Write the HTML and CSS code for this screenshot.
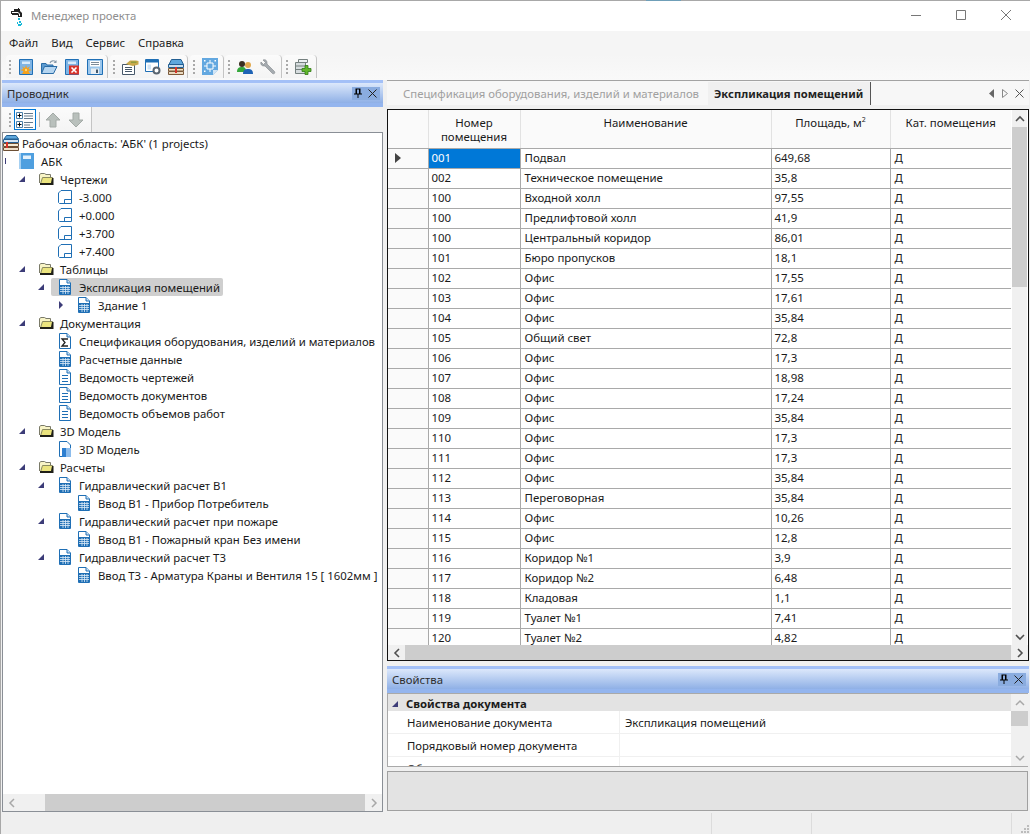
FILE: index.html
```html
<!DOCTYPE html>
<html lang="ru">

<head>
    <meta charset="UTF-8">
    <title>Менеджер проекта</title>
    <link rel="stylesheet" href="styles.css">
</head>

<body>

    <!-- icons used more than once -->
    <svg class="sprites" width="0" height="0">
        <symbol id="i-table" viewBox="0 0 16 16">
            <path d="M2.500 .5H10L13.500 4V15.500H2.500Z" fill="#fff" stroke="#1f6fb5"/>
            <path d="M10 .5V4H13.500" fill="#cfe3f5" stroke="#1f6fb5"/>
            <path d="M3 6H13V15H3Z" fill="#1f6fb5"/>
            <path d="M3 8.500H13M3 10.500H13M3 12.500H13M6 7V15M8.500 7V15M11 7V15" stroke="#dcebf8" stroke-width=".8"/>
        </symbol>
        <symbol id="i-doc" viewBox="0 0 16 16">
            <path d="M2.500 .5H10L13.500 4V15.500H2.500Z" fill="#fff" stroke="#1f6fb5"/>
            <path d="M10 .5V4H13.500" fill="#cfe3f5" stroke="#1f6fb5"/>
            <path d="M5 6.500H11M5 9.500H11M5 12.500H11" stroke="#1f6fb5"/>
        </symbol>
        <symbol id="i-folder" viewBox="0 0 16 16">
            <path d="M1.500 12V3.500L3 2.500H6.500L8 3.500H12.500V7" fill="#f8f4c6" stroke="#7a7a68"/>
            <path d="M2.500 13L4.500 6.500H14.500V13Z" fill="#ebe47e" stroke="#8a8a60"/>
            <path d="M2 12H13L14 7H15.500V14H2Z" fill="#1f1f18"/>
        </symbol>
        <symbol id="i-sheet" viewBox="0 0 16 16">
            <path d="M1.500 13.500V4L4 1.500H14.500V14.500H2.500Z" fill="#fff" stroke="#1f6fb5"/>
            <path d="M7.500 14V10.500H14.500" fill="none" stroke="#1f6fb5"/>
        </symbol>
        <symbol id="arrow-open" viewBox="0 0 8 8">
            <path d="M7 1V7H1Z" fill="#3c3c78"/>
        </symbol>
        <symbol id="arrow-closed" viewBox="0 0 8 8">
            <path d="M2 0L6 4L2 8Z" fill="#3c3c78"/>
        </symbol>
    </svg>

    <div class="window">

        <i class="behind-window"></i>

        <div class="titlebar">
            <svg class="app-icon" width="12" height="19" viewBox="0 0 12 19">
                <path d="M0 3H3V1H7V0H8V1H9V3L11 5V9H7V7H1V6H0Z" fill="#222"/>
                <path d="M1 4H7L9 6V8H8V6L7 5H1Z" fill="#fff"/>
                <path d="M7 10H9V12H7ZM8 13H10V15H8ZM6 14H7V16H6ZM7 16H10V18H7ZM10 15H11V17H10Z" fill="#18b8d8"/>
            </svg>
            <span class="title-text">Менеджер проекта</span>
            <div class="window-buttons">
                <svg width="12" height="12" viewBox="0 0 12 12"><path d="M1 6.500H11" stroke="#777"/></svg>
                <svg width="12" height="12" viewBox="0 0 12 12"><path d="M1.500 1.500H10.500V10.500H1.500Z" fill="none" stroke="#777"/></svg>
                <svg width="12" height="12" viewBox="0 0 12 12"><path d="M1 1L11 11M11 1L1 11" stroke="#777"/></svg>
            </div>
        </div>

        <div class="menubar">
            <span>Файл</span>
            <span>Вид</span>
            <span>Сервис</span>
            <span>Справка</span>
        </div>

        <div class="toolbar">
            <div class="tool-group group-1">
                <i class="grip"></i>
                <span class="tool">
                    <svg width="16" height="16" viewBox="0 0 16 16">
                        <path d="M1.500 .5H14.500V15.500H1.500Z" fill="#7fb4e4" stroke="#1f6fb5"/>
                        <path d="M4 2.500H12V5H4Z" fill="#d9ebfa"/>
                        <path d="M8 6L9 9L12 7.500L10.500 10L14 11L10.500 12L12 15H4L5.500 12L2 11L5.500 10L4 7.500L7 9Z" fill="#f7a11a"/>
                        <path d="M8 9.500L9 11L8 12.500L7 11Z" fill="#fff3a0"/>
                    </svg>
                </span>
                <span class="tool">
                    <svg width="18" height="16" viewBox="0 0 18 16">
                        <path d="M1.500 14.500V4.500H6L7 6H13V14.500Z" fill="#5d9bd0" stroke="#2a6ca6"/>
                        <path d="M1.500 14.500L4.500 7.500H17L13.500 14.500Z" fill="#b5d5f0" stroke="#2a6ca6"/>
                        <path d="M10 4C11 1.500 14 1 16 3" fill="none" stroke="#8a9cab" stroke-width="1.200"/>
                        <path d="M16.500 1V4H13.500Z" fill="#8a9cab"/>
                    </svg>
                </span>
                <span class="tool">
                    <svg width="16" height="16" viewBox="0 0 16 16">
                        <path d="M1.500 .5H14.500V15.500H1.500Z" fill="#7fb4e4" stroke="#1f6fb5"/>
                        <path d="M4 2.500H12V5H4Z" fill="#d9ebfa"/>
                        <path d="M5 6.500H15V15.500H5Z" fill="#d8342a"/>
                        <path d="M7.500 8.500L12.500 13.500M12.500 8.500L7.500 13.500" stroke="#fff" stroke-width="1.600"/>
                    </svg>
                </span>
                <span class="tool">
                    <svg width="16" height="16" viewBox="0 0 16 16">
                        <path d="M.5 .5H15.500V15.500H.5Z" fill="#9cc7ec" stroke="#1f6fb5"/>
                        <path d="M3 2H13V7.500H3Z" fill="#fff"/>
                        <path d="M4 3.500H12M4 5.500H12" stroke="#7d8b98"/>
                        <path d="M4 9.500H12V15H4Z" fill="#e8eef3"/>
                        <path d="M9 10.500H11V14H9Z" fill="#42586c"/>
                    </svg>
                </span>
            </div>
            <div class="tool-group group-2">
                <i class="grip"></i>
                <span class="tool">
                    <svg width="18" height="16" viewBox="0 0 18 16">
                        <path d="M1.500 5.500H13.500V15.500H1.500Z" fill="#fff" stroke="#47586a"/>
                        <path d="M4 8.500H11M4 10.500H11M4 12.500H11" stroke="#47586a"/>
                        <path d="M5 5L9 1.500H15L17.500 2V5.500L12 7L8 6Z" fill="#c9a94c"/>
                        <path d="M10 2.500H15.500V4H10Z" fill="#8f9c3f"/>
                    </svg>
                </span>
                <span class="tool">
                    <svg width="16" height="16" viewBox="0 0 16 16">
                        <path d="M.5 .5H13.500V12.500H.5Z" fill="#fff" stroke="#1f6fb5"/>
                        <path d="M1 1H13V3.500H1Z" fill="#1f6fb5"/>
                        <path d="M2.500 5.500H6V10.500H2.500Z" fill="#cfe3f5"/>
                        <circle cx="11.500" cy="11.500" r="3" fill="#fff" stroke="#5a6570" stroke-width="2"/>
                    </svg>
                </span>
                <span class="tool">
                    <svg width="18" height="16" viewBox="0 0 18 16">
                        <path d="M4.500 .5H14L16.500 5.500H2Z" fill="#5ea7dc" stroke="#235f92"/>
                        <path d="M1.500 5.500H16.500V8.500H1.500Z" fill="#c7def0" stroke="#235f92"/>
                        <path d="M1.500 9.500H16.500V12H1.500Z" fill="#f2e3c5" stroke="#7b5a3a"/>
                        <path d="M1.500 12.500H16.500V15.500H1.500Z" fill="#e9d9c0" stroke="#7b5a3a"/>
                        <path d="M8 8H10V14H8Z" fill="#d8342a"/>
                    </svg>
                </span>
            </div>
            <div class="tool-group group-3">
                <i class="grip"></i>
                <span class="tool">
                    <svg width="16" height="17" viewBox="0 0 16 17">
                        <path d="M0 0H16V12L11 17H0Z" fill="#63a8e0"/>
                        <path d="M16 12H11V17Z" fill="#d2e5f5"/>
                        <path d="M5 5H11V11H5Z" fill="none" stroke="#fff"/>
                        <path d="M8 2V5M8 11V14M2 8H5M11 8H14" stroke="#fff"/>
                        <path d="M2 2H3.500V3.500H2ZM12.500 2H14V3.500H12.500ZM2 12.500H3.500V14H2Z" fill="#fff"/>
                    </svg>
                </span>
            </div>
            <div class="tool-group group-4">
                <i class="grip"></i>
                <span class="tool">
                    <svg width="18" height="16" viewBox="0 0 18 16">
                        <circle cx="6" cy="5" r="3" fill="#3a2f22"/>
                        <path d="M1 13C1 9 3 8 6 8C9 8 10 9 10 13Z" fill="#35a83c"/>
                        <circle cx="12" cy="6" r="3" fill="#e2a94e"/>
                        <path d="M7 15C7 11 9 10 12 10C15 10 17 11 17 15Z" fill="#1d62b5"/>
                    </svg>
                </span>
                <span class="tool">
                    <svg width="16" height="16" viewBox="0 0 16 16">
                        <path d="M1 3L3.500 5.500L5.500 3.500L3 1C5 .2 7 1 7 4L7 5L14.500 12.500C15.500 14 14 15.500 12.500 14.500L5 7H4C1.500 7 .2 5 1 3Z" fill="#a5abb0" stroke="#80858a" stroke-width=".6"/>
                    </svg>
                </span>
            </div>
            <div class="tool-group group-5">
                <i class="grip"></i>
                <span class="tool">
                    <svg width="18" height="18" viewBox="0 0 18 18">
                        <path d="M1.500 4.500H11.500V15.500H1.500Z" fill="#d6dcde" stroke="#75807f"/>
                        <path d="M4.500 1.500H13.500V4.500H4.500Z" fill="#eef1f2" stroke="#75807f"/>
                        <path d="M1.500 8H11.500M1.500 11.500H11.500" stroke="#75807f"/>
                        <path d="M11 7.500H14V10.500H17V13.500H14V16.500H11V13.500H8V10.500H11Z" fill="#62b62c" stroke="#2f7a14" stroke-width=".8"/>
                    </svg>
                </span>
            </div>
        </div>

        <div class="main">

            <section class="explorer">
                <div class="dock-header">
                    <span>Проводник</span>
                    <div class="dock-buttons">
                        <svg width="10" height="10" viewBox="0 0 10 10"><path d="M2.500 .5H7.500V5.500H9V6.500H5.500V10H4.500V6.500H1V5.500H2.500ZM4 1.500V5.500H6V1.500Z" fill="#000"/></svg>
                        <svg width="9" height="9" viewBox="0 0 9 9"><path d="M.5 .5L8.500 8.500M8.500 .5L.5 8.500" stroke="#222"/></svg>
                    </div>
                </div>
                <div class="tree-toolbar">
                    <i class="grip"></i>
                    <span class="tool tool-active">
                        <svg width="18" height="18" viewBox="0 0 18 18">
                            <path d="M.5 1.500H6.500V7.500H.5ZM.5 10.500H6.500V16.500H.5Z" fill="#fff" stroke="#4a7fa8"/>
                            <path d="M1.500 4.500H5.500M3.500 2.500V6.500M1.500 13.500H5.500M3.500 11.500V15.500" stroke="#000"/>
                            <path d="M8 2.500H17M8 5H17M8 7.500H17M8 11.500H17M8 14H14M8 16.500H17" stroke="#657a8c"/>
                        </svg>
                    </span>
                    <i class="tool-sep"></i>
                    <span class="tool">
                        <svg width="16" height="16" viewBox="0 0 16 16"><path d="M8 1L15 8H11V15H5V8H1Z" fill="#b9c0bc" stroke="#a3aaa6"/></svg>
                    </span>
                    <span class="tool">
                        <svg width="16" height="16" viewBox="0 0 16 16"><path d="M8 15L15 8H11V1H5V8H1Z" fill="#b9c0bc" stroke="#a3aaa6"/></svg>
                    </span>
                </div>
                <div class="tree-box">
                    <div class="tree">
                        <div class="node lvl-root">
                            <svg class="ico" width="16" height="16" viewBox="0 0 16 16">
                                <path d="M3.500 .5H13L15.500 4H1Z" fill="#5ea7dc" stroke="#235f92"/>
                                <path d="M.5 4.500H15.500V7.500H.5Z" fill="#d7e7f4" stroke="#235f92"/>
                                <path d="M.5 8.500H15.500V11.500H.5Z" fill="#f5ead2" stroke="#6c4f34"/>
                                <path d="M.5 12.500H15.500V15.500H.5Z" fill="#efe0ca" stroke="#6c4f34"/>
                                <path d="M3 7H5V13H3Z" fill="#d8342a"/>
                            </svg>
                            <span>Рабочая область: 'АБК' (1 projects)</span>
                        </div>
                        <div class="node lvl-1">
                            <span class="arrow"><svg width="2" height="8" viewBox="0 0 2 8"><path d="M0 1H1V7H0Z" fill="#3c3c78"/></svg></span>
                            <svg class="ico" width="16" height="16" viewBox="0 0 16 16">
                                <path d="M0 0H15V16H0Z" fill="#4f9fdf"/>
                                <path d="M0 0H2V16H0Z" fill="#a5d0f2"/>
                                <path d="M4 2.500H12V6H4Z" fill="#e4f1fb"/>
                            </svg>
                            <span>АБК</span>
                        </div>
                        <div class="node lvl-2"><span class="arrow"><svg width="8" height="8"><use href="#arrow-open"/></svg></span><svg class="ico" width="16" height="16"><use href="#i-folder"/></svg><span>Чертежи</span></div>
                        <div class="node lvl-3"><span class="arrow"></span><svg class="ico" width="16" height="16"><use href="#i-sheet"/></svg><span>-3.000</span></div>
                        <div class="node lvl-3"><span class="arrow"></span><svg class="ico" width="16" height="16"><use href="#i-sheet"/></svg><span>+0.000</span></div>
                        <div class="node lvl-3"><span class="arrow"></span><svg class="ico" width="16" height="16"><use href="#i-sheet"/></svg><span>+3.700</span></div>
                        <div class="node lvl-3"><span class="arrow"></span><svg class="ico" width="16" height="16"><use href="#i-sheet"/></svg><span>+7.400</span></div>
                        <div class="node lvl-2"><span class="arrow"><svg width="8" height="8"><use href="#arrow-open"/></svg></span><svg class="ico" width="16" height="16"><use href="#i-folder"/></svg><span>Таблицы</span></div>
                        <div class="node lvl-3">
                            <span class="arrow"><svg width="8" height="8"><use href="#arrow-open"/></svg></span>
                            <div class="node-selected"><svg class="ico" width="16" height="16"><use href="#i-table"/></svg><span>Экспликация помещений</span></div>
                        </div>
                        <div class="node lvl-4"><span class="arrow"><svg width="8" height="8"><use href="#arrow-closed"/></svg></span><svg class="ico" width="16" height="16"><use href="#i-table"/></svg><span>Здание 1</span></div>
                        <div class="node lvl-2"><span class="arrow"><svg width="8" height="8"><use href="#arrow-open"/></svg></span><svg class="ico" width="16" height="16"><use href="#i-folder"/></svg><span>Документация</span></div>
                        <div class="node lvl-3">
                            <span class="arrow"></span>
                            <svg class="ico" width="16" height="16" viewBox="0 0 16 16">
                                <path d="M2.500 .5H10L13.500 4V15.500H2.500Z" fill="#fff" stroke="#1f6fb5"/>
                                <path d="M10 .5V4H13.500" fill="#cfe3f5" stroke="#1f6fb5"/>
                                <path d="M11 6H5L8 9.500L5 13H11" fill="none" stroke="#222" stroke-width="1.300"/>
                            </svg>
                            <span>Спецификация оборудования, изделий и материалов</span>
                        </div>
                        <div class="node lvl-3"><span class="arrow"></span><svg class="ico" width="16" height="16"><use href="#i-table"/></svg><span>Расчетные данные</span></div>
                        <div class="node lvl-3"><span class="arrow"></span><svg class="ico" width="16" height="16"><use href="#i-doc"/></svg><span>Ведомость чертежей</span></div>
                        <div class="node lvl-3"><span class="arrow"></span><svg class="ico" width="16" height="16"><use href="#i-doc"/></svg><span>Ведомость документов</span></div>
                        <div class="node lvl-3"><span class="arrow"></span><svg class="ico" width="16" height="16"><use href="#i-doc"/></svg><span>Ведомость объемов работ</span></div>
                        <div class="node lvl-2"><span class="arrow"><svg width="8" height="8"><use href="#arrow-open"/></svg></span><svg class="ico" width="16" height="16"><use href="#i-folder"/></svg><span>3D Модель</span></div>
                        <div class="node lvl-3">
                            <span class="arrow"></span>
                            <svg class="ico" width="16" height="16" viewBox="0 0 16 16">
                                <path d="M2.500 .5H10L13.500 4V15.500H2.500Z" fill="#fff" stroke="#1f6fb5"/>
                                <path d="M5 7H14V16H5Z" fill="#8cbcec"/>
                                <path d="M5 7H9V16H5Z" fill="#2d7fd0"/>
                            </svg>
                            <span>3D Модель</span>
                        </div>
                        <div class="node lvl-2"><span class="arrow"><svg width="8" height="8"><use href="#arrow-open"/></svg></span><svg class="ico" width="16" height="16"><use href="#i-folder"/></svg><span>Расчеты</span></div>
                        <div class="node lvl-3"><span class="arrow"><svg width="8" height="8"><use href="#arrow-open"/></svg></span><svg class="ico" width="16" height="16"><use href="#i-table"/></svg><span>Гидравлический расчет В1</span></div>
                        <div class="node lvl-4"><span class="arrow"></span><svg class="ico" width="16" height="16"><use href="#i-table"/></svg><span>Ввод В1 - Прибор Потребитель</span></div>
                        <div class="node lvl-3"><span class="arrow"><svg width="8" height="8"><use href="#arrow-open"/></svg></span><svg class="ico" width="16" height="16"><use href="#i-table"/></svg><span>Гидравлический расчет при пожаре</span></div>
                        <div class="node lvl-4"><span class="arrow"></span><svg class="ico" width="16" height="16"><use href="#i-table"/></svg><span>Ввод В1 - Пожарный кран Без имени</span></div>
                        <div class="node lvl-3"><span class="arrow"><svg width="8" height="8"><use href="#arrow-open"/></svg></span><svg class="ico" width="16" height="16"><use href="#i-table"/></svg><span>Гидравлический расчет Т3</span></div>
                        <div class="node lvl-4"><span class="arrow"></span><svg class="ico" width="16" height="16"><use href="#i-table"/></svg><span>Ввод Т3 - Арматура Краны и Вентиля 15 [ 1602мм ]</span></div>
                    </div>
                    <div class="hscroll hscroll-light">
                        <span class="scroll-btn"><svg width="8" height="10" viewBox="0 0 8 10"><path d="M6 1L2 5L6 9" fill="none" stroke="#a8a8a8" stroke-width="1.500"/></svg></span>
                        <span class="scroll-gap"></span>
                        <span class="scroll-thumb"></span>
                        <span class="scroll-btn"><svg width="8" height="10" viewBox="0 0 8 10"><path d="M2 1L6 5L2 9" fill="none" stroke="#a8a8a8" stroke-width="1.500"/></svg></span>
                    </div>
                </div>
            </section>

            <section class="workspace">
                <div class="tabs">
                    <span class="tab">Спецификация оборудования, изделий и материалов</span>
                    <span class="tab tab-active">Экспликация помещений</span>
                    <div class="tab-nav">
                        <svg width="6" height="9" viewBox="0 0 6 9"><path d="M5 0V9L0 4.500Z" fill="#666"/></svg>
                        <svg width="6" height="9" viewBox="0 0 6 9"><path d="M.5 .5V8.500L5.500 4.500Z" fill="none" stroke="#888"/></svg>
                        <svg width="9" height="9" viewBox="0 0 9 9"><path d="M.5 .5L8.500 8.500M8.500 .5L.5 8.500" stroke="#555"/></svg>
                    </div>
                </div>

                <div class="grid-box">
                    <div class="grid-area">
                        <div class="grid-scroll">
                            <table class="grid">
                                <colgroup>
                                    <col class="col-row"><col class="col-num"><col class="col-name"><col class="col-area"><col class="col-cat">
                                </colgroup>
                                <thead>
                                    <tr>
                                        <th></th>
                                        <th>Номер помещения</th>
                                        <th>Наименование</th>
                                        <th>Площадь, м<sup>2</sup></th>
                                        <th>Кат. помещения</th>
                                    </tr>
                                </thead>
                                <tbody>
                                    <tr><td class="row-head"><svg width="6" height="10" viewBox="0 0 6 10"><path d="M0 0L6 5L0 10Z" fill="#444"/></svg></td><td class="cell-current">001</td><td>Подвал</td><td>649,68</td><td>Д</td></tr>
                                    <tr><td class="row-head"></td><td>002</td><td>Техническое помещение</td><td>35,8</td><td>Д</td></tr>
                                    <tr><td class="row-head"></td><td>100</td><td>Входной холл</td><td>97,55</td><td>Д</td></tr>
                                    <tr><td class="row-head"></td><td>100</td><td>Предлифтовой холл</td><td>41,9</td><td>Д</td></tr>
                                    <tr><td class="row-head"></td><td>100</td><td>Центральный коридор</td><td>86,01</td><td>Д</td></tr>
                                    <tr><td class="row-head"></td><td>101</td><td>Бюро пропусков</td><td>18,1</td><td>Д</td></tr>
                                    <tr><td class="row-head"></td><td>102</td><td>Офис</td><td>17,55</td><td>Д</td></tr>
                                    <tr><td class="row-head"></td><td>103</td><td>Офис</td><td>17,61</td><td>Д</td></tr>
                                    <tr><td class="row-head"></td><td>104</td><td>Офис</td><td>35,84</td><td>Д</td></tr>
                                    <tr><td class="row-head"></td><td>105</td><td>Общий свет</td><td>72,8</td><td>Д</td></tr>
                                    <tr><td class="row-head"></td><td>106</td><td>Офис</td><td>17,3</td><td>Д</td></tr>
                                    <tr><td class="row-head"></td><td>107</td><td>Офис</td><td>18,98</td><td>Д</td></tr>
                                    <tr><td class="row-head"></td><td>108</td><td>Офис</td><td>17,24</td><td>Д</td></tr>
                                    <tr><td class="row-head"></td><td>109</td><td>Офис</td><td>35,84</td><td>Д</td></tr>
                                    <tr><td class="row-head"></td><td>110</td><td>Офис</td><td>17,3</td><td>Д</td></tr>
                                    <tr><td class="row-head"></td><td>111</td><td>Офис</td><td>17,3</td><td>Д</td></tr>
                                    <tr><td class="row-head"></td><td>112</td><td>Офис</td><td>35,84</td><td>Д</td></tr>
                                    <tr><td class="row-head"></td><td>113</td><td>Переговорная</td><td>35,84</td><td>Д</td></tr>
                                    <tr><td class="row-head"></td><td>114</td><td>Офис</td><td>10,26</td><td>Д</td></tr>
                                    <tr><td class="row-head"></td><td>115</td><td>Офис</td><td>12,8</td><td>Д</td></tr>
                                    <tr><td class="row-head"></td><td>116</td><td>Коридор №1</td><td>3,9</td><td>Д</td></tr>
                                    <tr><td class="row-head"></td><td>117</td><td>Коридор №2</td><td>6,48</td><td>Д</td></tr>
                                    <tr><td class="row-head"></td><td>118</td><td>Кладовая</td><td>1,1</td><td>Д</td></tr>
                                    <tr><td class="row-head"></td><td>119</td><td>Туалет №1</td><td>7,41</td><td>Д</td></tr>
                                    <tr><td class="row-head"></td><td>120</td><td>Туалет №2</td><td>4,82</td><td>Д</td></tr>
                                </tbody>
                            </table>
                        </div>
                        <div class="vscroll vscroll-dark">
                            <span class="scroll-btn"><svg width="10" height="8" viewBox="0 0 10 8"><path d="M1 6L5 2L9 6" fill="none" stroke="#505050" stroke-width="1.600"/></svg></span>
                            <span class="scroll-thumb"></span>
                            <span class="scroll-gap"></span>
                            <span class="scroll-btn"><svg width="10" height="8" viewBox="0 0 10 8"><path d="M1 2L5 6L9 2" fill="none" stroke="#505050" stroke-width="1.600"/></svg></span>
                        </div>
                    </div>
                    <div class="hscroll">
                        <span class="scroll-btn"><svg width="8" height="10" viewBox="0 0 8 10"><path d="M6 1L2 5L6 9" fill="none" stroke="#505050" stroke-width="1.600"/></svg></span>
                        <span class="scroll-thumb"></span>
                        <span class="scroll-btn"><svg width="8" height="10" viewBox="0 0 8 10"><path d="M2 1L6 5L2 9" fill="none" stroke="#505050" stroke-width="1.600"/></svg></span>
                    </div>
                </div>

                <div class="dock-header">
                    <span>Свойства</span>
                    <div class="dock-buttons">
                        <svg width="10" height="10" viewBox="0 0 10 10"><path d="M2.500 .5H7.500V5.500H9V6.500H5.500V10H4.500V6.500H1V5.500H2.500ZM4 1.500V5.500H6V1.500Z" fill="#000"/></svg>
                        <svg width="9" height="9" viewBox="0 0 9 9"><path d="M.5 .5L8.500 8.500M8.500 .5L.5 8.500" stroke="#222"/></svg>
                    </div>
                </div>

                <div class="props">
                    <div class="props-list">
                        <div class="props-group">
                            <svg width="8" height="8"><use href="#arrow-open"/></svg>
                            <span>Свойства документа</span>
                        </div>
                        <div class="props-row"><span class="props-name">Наименование документа</span><span class="props-value">Экспликация помещений</span></div>
                        <div class="props-row"><span class="props-name">Порядковый номер документа</span><span class="props-value"></span></div>
                        <div class="props-row"><span class="props-name">Обозначение</span><span class="props-value"></span></div>
                    </div>
                    <div class="vscroll vscroll-light">
                        <span class="scroll-btn"><svg width="10" height="8" viewBox="0 0 10 8"><path d="M1 6L5 2L9 6" fill="none" stroke="#a8a8a8" stroke-width="1.500"/></svg></span>
                        <span class="scroll-thumb"></span>
                        <span class="scroll-gap"></span>
                        <span class="scroll-btn"><svg width="10" height="8" viewBox="0 0 10 8"><path d="M1 2L5 6L9 2" fill="none" stroke="#a8a8a8" stroke-width="1.500"/></svg></span>
                    </div>
                </div>

                <div class="props-help"></div>
            </section>
        </div>

        <div class="statusbar">
            <span class="status-main"></span>
            <span class="status-a"></span>
            <span class="status-b"></span>
            <span class="status-c">
                <svg width="8" height="8" viewBox="0 0 8 8"><path d="M6 0H8V2H6ZM3 3H5V5H3ZM6 3H8V5H6ZM0 6H2V8H0ZM3 6H5V8H3ZM6 6H8V8H6Z" fill="#bcbcbc"/></svg>
            </span>
        </div>

    </div>

</body>

</html>
```

FILE: styles.css
```css
* {
    box-sizing: border-box;
}

html,
body {
    margin: 0;
    height: 100%;
    overflow: hidden;
}

body {
    font-family: "Noto Sans", "Open Sans", sans-serif;
    font-size: 11.35px;
    color: #1a1a1a;
    background-color: #f0f0f0;
}

.sprites {
    position: absolute;
}

svg {
    display: block;
    flex: none;
}

.window {
    position: relative;
    display: flex;
    flex-direction: column;
    height: 834px;
    border-left: 1px solid #a8a8a8;
    border-top: 1px solid #a8a8a8;
}

/* bit of the window behind, shows over the top edge */
.behind-window {
    position: absolute;
    top: -1px;
    left: 645px;
    width: 35px;
    height: 1px;
    background-color: #6f9fb8;
}

/* title */
.titlebar {
    display: flex;
    align-items: center;
    height: 30px;
    flex: none;
    padding: 3px 0 0 10px;
    background-color: #fff;
}

.title-text {
    margin: -5px 0 0 8px;
    color: #8f8f8f;
}

.window-buttons {
    display: flex;
    gap: 33px;
    margin-left: auto;
    padding: 0 18px 5px 0;
}

/* menu */
.menubar {
    display: flex;
    align-items: center;
    gap: 13px;
    height: 23px;
    flex: none;
    padding-left: 8px;
    background-color: #f5f5f5;
    color: #222;
}

/* toolbar */
.toolbar {
    display: flex;
    height: 26px;
    flex: none;
    padding: 1px 0 2px 5px;
    background: linear-gradient(#f5f5f5, #f9f9f9);
}

.tool-group {
    display: flex;
    align-items: center;
    padding-left: 3px;
    border-right: 1px solid #c4c4c4;
    border-radius: 4px 4px 0 0;
    background: linear-gradient(#fbfbfb, #f4f4f4);
}

.group-1 {
    width: 102px;
    margin-right: 2px;
}

.group-2 {
    width: 78px;
    margin-right: 2px;
}

.group-3 {
    width: 34px;
    margin-right: 1px;
}

.group-4 {
    width: 57px;
    margin-right: 1px;
}

.group-5 {
    width: 34px;
}

.grip {
    width: 2px;
    height: 14px;
    margin-right: 3px;
    background: repeating-linear-gradient(#a9a9a9 0 2px, transparent 2px 4px);
}

.tool {
    display: flex;
    align-items: center;
    justify-content: center;
    width: 23px;
    height: 22px;
}

/* layout below the toolbar */
.main {
    display: flex;
    flex: 1;
    min-height: 0;
    padding-left: 1px;
    gap: 4px;
}

.explorer {
    display: flex;
    flex-direction: column;
    width: 381px;
    flex: none;
}

.workspace {
    display: flex;
    flex-direction: column;
    flex: 1;
    min-width: 0;
    margin-right: 1px;
}

/* dock headers */
.dock-header {
    display: flex;
    align-items: center;
    justify-content: space-between;
    height: 27px;
    flex: none;
    padding-left: 5px;
    border-top: 3px solid #a3c0f7;
    border-bottom: 4px solid #94b5ee;
    background: linear-gradient(#dce8fb, #8fb0e6);
    color: #2e2e2e;
}

.workspace .dock-header {
    margin-top: 5px;
}

.dock-buttons {
    display: flex;
    align-items: center;
    gap: 5px;
    height: 13px;
    width: 28px;
    margin-right: 3px;
    padding-left: 1px;
    background-color: #8aacdf;
}

/* left panel */
.tree-toolbar {
    display: flex;
    align-items: center;
    width: 90px;
    height: 25px;
    flex: none;
    padding-left: 7px;
    border-right: 1px solid #c4c4c4;
    background: linear-gradient(#fbfbfb, #f4f4f4);
}

.tool-active {
    width: 22px;
    height: 21px;
    margin-right: 3px;
    border: 1px solid #0078d7;
    background-color: #fdfdfd;
}

.tool-sep {
    width: 1px;
    height: 15px;
    margin-right: 1px;
    background-color: #b5b5b5;
}

.tree-box {
    display: flex;
    flex-direction: column;
    flex: 1;
    min-height: 0;
    border: 1px solid #8a8f96;
    background-color: #fff;
}

.tree {
    flex: 1;
    padding-top: 1px;
    overflow: hidden;
}

.node {
    display: flex;
    align-items: center;
    height: 18px;
    white-space: nowrap;
}

.arrow {
    display: flex;
    align-items: center;
    width: 20px;
    flex: none;
}

.ico {
    margin-right: 6px;
}

.lvl-root .ico {
    margin-right: 3px;
}

.lvl-1 {
    padding-left: 2px;
}

.lvl-1 .arrow {
    width: 14px;
}

.lvl-2 {
    padding-left: 15px;
}

.lvl-3 {
    padding-left: 34px;
}

.lvl-4 {
    padding-left: 54px;
}

.lvl-4 .arrow {
    width: 19px;
}

.node-selected {
    display: flex;
    align-items: center;
    height: 18px;
    margin-left: -6px;
    padding: 0 3px 0 6px;
    border-radius: 2px;
    background-color: #cfcfcf;
}

/* scrollbars */
.hscroll {
    display: flex;
    height: 15px;
    flex: none;
    background-color: #f0f0f0;
}

.hscroll .scroll-btn {
    width: 17px;
    display: flex;
    align-items: center;
    justify-content: center;
}

.hscroll .scroll-thumb {
    flex: 1;
    background-color: #cdcdcd;
}

.hscroll-light {
    height: 17px;
}

.hscroll-light .scroll-gap {
    width: 25px;
}

.vscroll {
    display: flex;
    flex-direction: column;
    width: 17px;
    flex: none;
    background-color: #f0f0f0;
}

.vscroll .scroll-btn {
    display: flex;
    align-items: center;
    justify-content: center;
    height: 17px;
}

.vscroll .scroll-gap {
    flex: 1;
}

.vscroll-dark {
    width: 15px;
    margin: 0 1px;
}

.vscroll-dark .scroll-thumb {
    height: 160px;
    background-color: #cdcdcd;
}

.vscroll-light .scroll-thumb {
    height: 15px;
    background-color: #cdcdcd;
}

/* tabs */
.tabs {
    display: flex;
    align-items: flex-end;
    height: 25px;
    flex: none;
    border-top: 1px solid #a3a3a3;
    background-color: #f7f7f7;
}

.tab {
    display: flex;
    align-items: center;
    height: 23px;
    padding: 0 6px;
    margin-left: 10px;
    white-space: nowrap;
    color: #a0a0a0;
}

.tab-active {
    margin-left: 3px;
    padding-right: 7px;
    border-right: 1px solid #555;
    font-weight: 700;
    font-size: 11.2px;
    color: #222;
    background-color: #f0f0f0;
}

.tab-nav {
    display: flex;
    align-items: center;
    gap: 7px;
    height: 23px;
    margin-left: auto;
    padding-right: 5px;
}

/* table */
.grid-box {
    display: flex;
    flex-direction: column;
    height: 552px;
    flex: none;
    margin-top: 4px;
    border: 1px solid #111;
    background-color: #fff;
}

.grid-area {
    display: flex;
    flex: 1;
    min-height: 0;
}

.grid-scroll {
    flex: 1;
    min-width: 0;
    overflow: hidden;
}

.grid {
    table-layout: fixed;
    width: 623px;
    border-collapse: collapse;
    font-size: 11.45px;
}

.col-row {
    width: 40px;
}

.col-num {
    width: 92px;
}

.col-name {
    width: 251px;
}

.col-area {
    width: 119px;
}

.col-cat {
    width: 121px;
}

.grid th {
    height: 38px;
    padding: 6px 12px 0;
    border-right: 1px solid #e2e2e2;
    border-bottom: 1px solid #a9a9a9;
    vertical-align: top;
    font-weight: 400;
    line-height: 14px;
    background-color: #fafafa;
}

.grid th sup {
    font-size: 7px;
    line-height: 0;
}

.grid td {
    height: 20px;
    padding: 0 0 0 3px;
    border-right: 1px solid #a9a9a9;
    border-bottom: 1px solid #a9a9a9;
    white-space: nowrap;
    line-height: 18px;
}

.grid td:nth-child(3),
.grid td:nth-child(5) {
    padding-left: 4px;
}

.grid th:last-child,
.grid td:last-child {
    border-right: none;
}

.grid .row-head {
    padding-left: 7px;
    background-color: #fafafa;
}

.grid .cell-current {
    background-color: #0078d7;
    color: #fff;
}

/* properties */
.props {
    display: flex;
    height: 74px;
    flex: none;
    margin-right: 1px;
    border-top: 1px solid #a9a9a9;
    border-left: 1px solid #a9a9a9;
    border-bottom: 1px solid #a9a9a9;
    background-color: #fff;
}

.props-list {
    flex: 1;
    min-width: 0;
    overflow: hidden;
}

.props-group {
    display: flex;
    align-items: center;
    height: 17px;
    padding: 2px 0 0 3px;
    font-weight: 700;
    background-color: #e3e3e3;
}

.props-group span {
    margin-left: 7px;
}

.props-row {
    display: flex;
    align-items: center;
    height: 23px;
    padding-left: 19px;
    border-bottom: 1px solid #f0f0f0;
}

.props-name {
    width: 212px;
    flex: none;
    white-space: nowrap;
}

.props-value {
    flex: 1;
    align-self: stretch;
    display: flex;
    align-items: center;
    padding-left: 5px;
    border-left: 1px solid #f0f0f0;
}

.props-help {
    height: 40px;
    flex: none;
    margin: 4px 1px 0 0;
    border: 1px solid #a0a0a0;
    background-color: #e3e3e3;
}

/* status bar */
.statusbar {
    display: flex;
    height: 22px;
    flex: none;
    background-color: #efefef;
}

.status-main {
    flex: 1;
}

.status-a,
.status-b,
.status-c {
    margin-top: 1px;
    border-left: 1px solid #dcdcdc;
}

.status-a {
    width: 100px;
}

.status-b {
    width: 200px;
}

.status-c {
    display: flex;
    align-items: flex-end;
    justify-content: flex-end;
    width: 19px;
    padding: 0 1px 1px 0;
}
```
